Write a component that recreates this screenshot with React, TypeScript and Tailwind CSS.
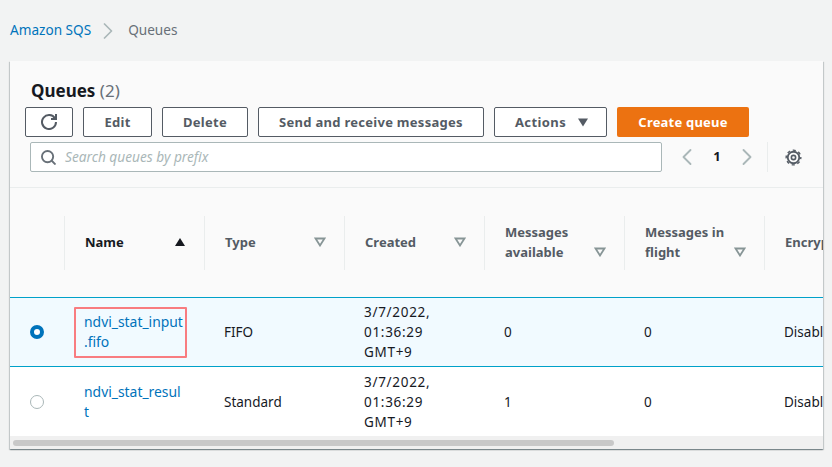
import { ChevronLeft, ChevronRight } from "lucide-react"

const font = "font-['Noto_Sans','Open_Sans',sans-serif]"

const Btn = ({ label, className }: { label: string; className: string }) => (
    <button className={`h-[30px] pt-px flex items-center justify-center border border-[#545b64] rounded-[2px] bg-white text-[13px] font-bold tracking-[0.28px] text-[#545b64] ${className}`}>
        {label}
    </button>
)

const SortIcon = ({ active }: { active?: boolean }) => (
    active
        ? <svg width="12" height="10" viewBox="0 0 12 10"><path d="M6 1 L11 9 H1 Z" fill="#16191f" /></svg>
        : <svg width="12" height="10" viewBox="0 0 12 10"><path d="M1.5 1.5 H10.5 L6 8.5 Z" fill="none" stroke="#879596" strokeWidth="1.8" /></svg>
)

const HeadCell = ({ lines, active, low }: { lines: string[]; active?: boolean; low?: boolean }) => (
    <div className="w-[140px] shrink-0 h-[54px] border-l border-[#eaeded] pl-5 pr-[18px] pb-px flex justify-between items-center">
        <div className={`text-[13px] font-bold leading-5 whitespace-nowrap ${active ? "text-[#16191f]" : "text-[#545b64]"}`}>
            {lines.map(l => <div key={l}>{l}</div>)}
        </div>
        <div className={low ? "pt-5" : ""}><SortIcon active={active} /></div>
    </div>
)

const Cell = ({ children }: { children: React.ReactNode }) => (
    <div className="w-[140px] shrink-0 pl-5 text-[13.5px] leading-5 text-[#16191f]">{children}</div>
)

const Row = ({ selected, name, type, avail }: { selected?: boolean; name: React.ReactNode; type: string; avail: string }) => (
    <div className={`flex items-center ${selected ? "h-[70px] bg-[#f1faff] border-y border-[#00a1c9]" : "h-[69px] bg-white"}`}>
        <div className="w-[54px] shrink-0 pl-5 flex">
            {selected
                ? <span className="w-[14px] h-[14px] rounded-full border-[4px] border-[#0073bb] bg-white" />
                : <span className="w-[14px] h-[14px] rounded-full border border-[#aab7b8] bg-white" />}
        </div>
        <div className="w-[140px] shrink-0 pl-5 text-[13.9px] leading-5 text-[#0073bb]">{name}</div>
        <Cell>{type}</Cell>
        <Cell><span className="tracking-[0.7px]">3/7/2022,<br />01:36:29<br />GMT+9</span></Cell>
        <Cell>{avail}</Cell>
        <Cell>0</Cell>
        <Cell><span className="whitespace-nowrap">Disabled</span></Cell>
    </div>
)

const App = () => {
    return (
        <div className={`${font} w-[832px] h-[467px] overflow-hidden bg-[#f2f3f3] px-[10px]`}>
            <nav className="h-[61px] flex items-center text-[13.6px] text-[#687078]">
                <span className="text-[#0073bb]">Amazon SQS</span>
                <ChevronRight className="w-7 h-7 mx-[3px] text-[#aab7b8]" strokeWidth={1.5} />
                <span className="ml-[3px]">Queues</span>
            </nav>
            <div className="w-[813px] h-[388px] bg-[#fafafa] overflow-hidden shadow-[0_1px_1px_0_rgba(0,28,36,0.3),1px_1px_1px_0_rgba(0,28,36,0.15),-1px_1px_1px_0_rgba(0,28,36,0.15)] flex flex-col">
                <div className="h-[127px] shrink-0 border-b border-[#eaeded] px-[15px] pt-[18px]">
                    <h1 className="pl-[6px] text-[17px] leading-6 font-bold text-[#16191f] h-[28px]">
                        Queues <span className="font-normal text-[#687078]">(2)</span>
                    </h1>
                    <div className="flex gap-[10px]">
                        <button className="w-[48px] h-[30px] flex items-center justify-center border border-[#545b64] rounded-[2px] bg-white">
                            <svg width="16" height="16" viewBox="0 0 16 16" fill="none" stroke="#545b64" strokeWidth="2">
                                <path d="M10 5h5V0" />
                                <path d="M15 8a7 7 0 1 1-1-3.6" />
                            </svg>
                        </button>
                        <Btn label="Edit" className="w-[69px]" />
                        <Btn label="Delete" className="w-[86px]" />
                        <Btn label="Send and receive messages" className="w-[226px]" />
                        <button className="w-[113px] h-[30px] pt-px pl-[3px] flex items-center justify-center gap-[11px] border border-[#545b64] rounded-[2px] bg-white text-[13px] font-bold tracking-[0.4px] text-[#545b64]">
                            Actions
                            <svg width="12" height="9" viewBox="0 0 12 9"><path d="M1 0.5 H11 L6 8.5 Z" fill="#545b64" /></svg>
                        </button>
                        <button className="w-[132px] h-[30px] pt-px rounded-[2px] bg-[#ec7211] text-[13px] font-bold tracking-[0.2px] text-white">Create queue</button>
                    </div>
                    <div className="flex items-center mt-[5px] pl-[5px]">
                        <div className="w-[632px] h-[30px] flex items-center gap-[9px] pl-[10px] border border-[#aab7b8] rounded-[2px] bg-white">
                            <svg width="15" height="15" viewBox="0 0 16 16" fill="none" stroke="#687078" strokeWidth="2">
                                <circle cx="7" cy="7" r="6" />
                                <path d="M11.2 11.2 L15.5 15.5" />
                            </svg>
                            <span className="text-[13.7px] italic text-[#aab7b8]">Search queues by prefix</span>
                        </div>
                        <ChevronLeft className="w-[28px] h-[28px] ml-[11px] text-[#aab7b8]" strokeWidth={1.6} />
                        <span className="w-[32px] text-center text-[13px] font-bold text-[#16191f]">1</span>
                        <ChevronRight className="w-[28px] h-[28px] text-[#aab7b8]" strokeWidth={1.6} />
                        <div className="h-[30px] ml-[6px] border-l border-[#eaeded]" />
                        <svg className="ml-[17px]" width="17" height="17" viewBox="0 0 16 16" fill="none" stroke="#545b64">
                            <circle cx="8" cy="8" r="5.4" strokeWidth="1.7" />
                            <circle cx="8" cy="8" r="6.9" strokeWidth="1.3" strokeDasharray="2.9 2.6" strokeDashoffset="1.4" />
                            <circle cx="8" cy="8" r="2" strokeWidth="1.5" />
                        </svg>
                    </div>
                </div>
                <div className="h-[109px] shrink-0 flex items-center pl-[54px]">
                    <HeadCell lines={["Name"]} active />
                    <HeadCell lines={["Type"]} />
                    <HeadCell lines={["Created"]} />
                    <HeadCell lines={["Messages", "available"]} low />
                    <HeadCell lines={["Messages in", "flight"]} low />
                    <HeadCell lines={["Encryption"]} />
                </div>
                <Row
                    selected
                    type="FIFO"
                    avail="0"
                    name={
                        <div className="relative">
                            ndvi_stat_input<br />.fifo
                            <div className="absolute left-[-10px] top-[-5px] w-[113px] h-[51px] border-2 border-[#f87c80] rounded-[1px]" />
                        </div>
                    }
                />
                <Row type="Standard" avail="1" name={<>ndvi_stat_resul<br />t</>} />
                <div className="h-[13px] shrink-0 bg-[#f0f0f0] pt-[4px] pl-[3px]">
                    <div className="w-[601px] h-[6px] rounded-[3px] bg-[#c8c8c8]" />
                </div>
            </div>
        </div>
    )
}

export default App
